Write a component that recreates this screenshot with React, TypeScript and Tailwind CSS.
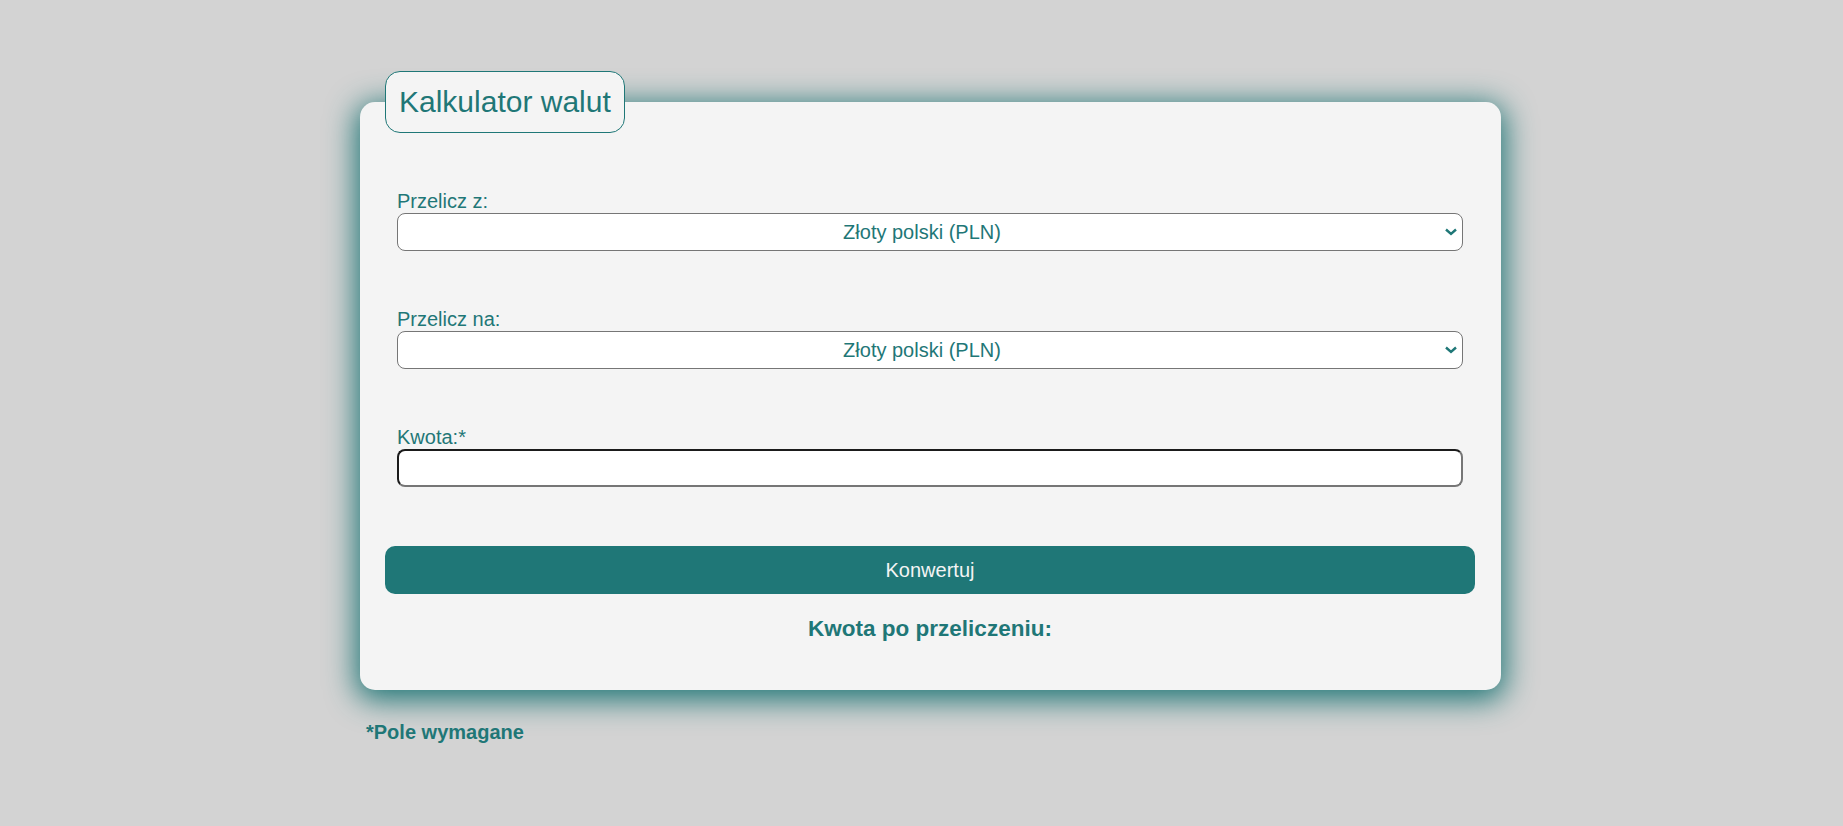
import React, { useState } from 'react';

const currencies = ['Złoty polski (PLN)', 'Euro (EUR)', 'Dolar amerykański (USD)', 'Funt brytyjski (GBP)'];

interface CurrencySelectProps {
  label: string;
  value: string;
  onChange: (v: string) => void;
}

const CurrencySelect: React.FC<CurrencySelectProps> = ({ label, value, onChange }) => (
  <div className="flex flex-col">
    <label className="text-[20px] leading-[23px] text-[#1f7777]">{label}</label>
    <div className="relative">
      <select
        value={value}
        onChange={(e) => onChange(e.target.value)}
        className="h-[38px] w-full appearance-none rounded-[8px] border border-[#767676] bg-white pl-[4px] pr-[20px] text-[20px] text-[#1f7777] [text-align-last:center] outline-none"
      >
        {currencies.map((c) => (
          <option key={c} value={c}>
            {c}
          </option>
        ))}
      </select>
      <svg
        className="pointer-events-none absolute right-[6px] top-1/2 h-[8px] w-[12px] -translate-y-1/2"
        viewBox="0 0 12 8"
        fill="none"
        stroke="#1f7777"
        strokeWidth="2.4"
      >
        <path d="M1 1.5 L6 6 L11 1.5" />
      </svg>
    </div>
  </div>
);

export default function App() {
  const [from, setFrom] = useState(currencies[0]);
  const [to, setTo] = useState(currencies[0]);
  const [amount, setAmount] = useState('');

  return (
    <div className="min-h-[826px] bg-[#d3d3d3] pt-[71px] font-['Liberation_Sans',Arial,sans-serif]">
      <div className="ml-[360px] w-[1141px]">
        <div className="mt-[31px] flex flex-col rounded-[15px] bg-[#f4f4f4] pb-[49px] pl-[25px] pr-[26px] shadow-[0_6px_30px_4px_#1f7676]">
          <div className="-mt-[31px] self-start rounded-[15px] border border-[#1f7777] bg-[#f4f4f4] px-[13px] py-[13px] text-[30px] leading-[34px] text-[#1f7777]">
            Kalkulator walut
          </div>

          <div className="mx-[12px] mt-[57px] flex flex-col gap-[57px]">
            <CurrencySelect label="Przelicz z:" value={from} onChange={setFrom} />
            <CurrencySelect label="Przelicz na:" value={to} onChange={setTo} />
            <div className="flex flex-col">
              <label className="text-[20px] leading-[23px] text-[#1f7777]">Kwota:*</label>
              <input
                type="text"
                value={amount}
                onChange={(e) => setAmount(e.target.value)}
                className="h-[38px] w-full rounded-[8px] border-2 border-t-[#1b1b1b] border-l-[#1b1b1b] border-b-[#767676] border-r-[#767676] bg-white px-2 text-[20px] outline-none"
              />
            </div>
          </div>

          <button className="mt-[59px] h-[48px] w-full rounded-[10px] bg-[#1f7777] text-[20px] text-[#f4f4f4]">
            Konwertuj
          </button>

          <h3 className="mt-[22px] text-center text-[22.5px] font-bold leading-[25px] text-[#1f7777]">
            Kwota po przeliczeniu:
          </h3>
        </div>

        <p className="ml-[6px] mt-[31px] text-[20px] font-bold leading-[23px] text-[#1f7777]">*Pole wymagane</p>
      </div>
    </div>
  );
}
